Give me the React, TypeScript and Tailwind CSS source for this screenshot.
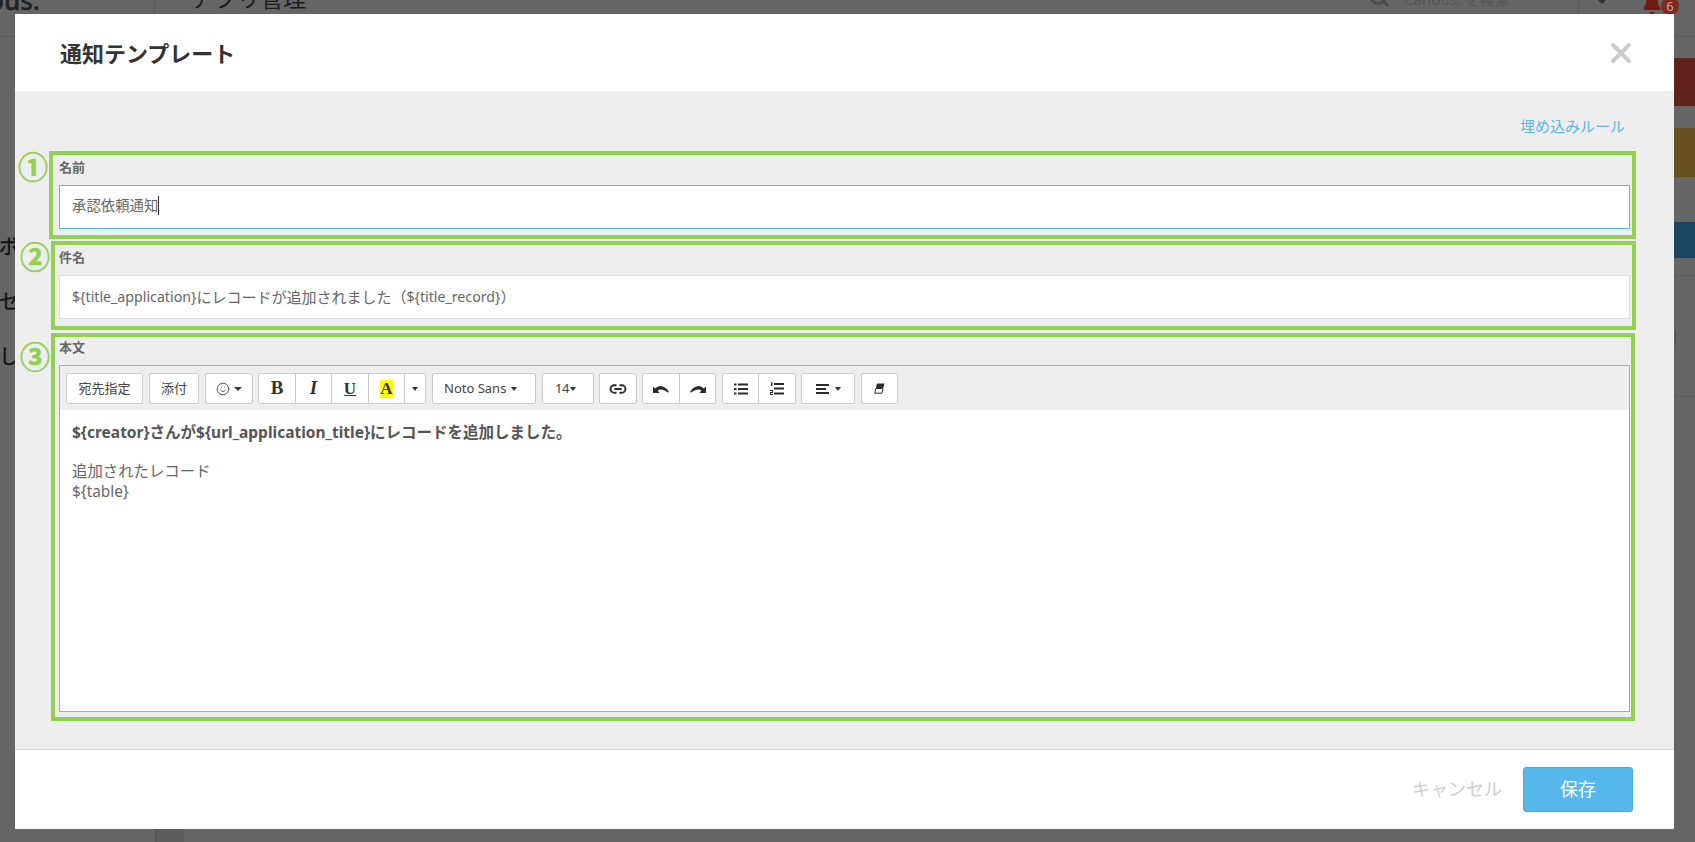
import { ReactNode } from "react"
import { X, Search, Bell, Link2, Smile } from "lucide-react"

function Caret({ small = false, className = "" }: { small?: boolean; className?: string }) {
  return (
    <span
      className={`inline-block w-0 h-0 border-x-transparent border-t-[#333] ${
        small ? "border-x-[3px] border-t-[4px]" : "border-x-[4px] border-t-[4px]"
      } ${className}`}
    />
  )
}

function ToolButton({ width, children, className = "" }: { width: string; children: ReactNode; className?: string }) {
  return (
    <div className={`h-[31px] flex items-center justify-center bg-white border border-[#ccc] rounded-[2px] text-[13px] text-[#444] ${width} ${className}`}>
      {children}
    </div>
  )
}

function GroupCell({ width, children, last = false }: { width: string; children: ReactNode; last?: boolean }) {
  return (
    <div className={`h-full flex items-center justify-center ${width} ${last ? "" : "border-r border-[#ccc]"}`}>
      {children}
    </div>
  )
}

function Group({ width, className = "", children }: { width: string; className?: string; children: ReactNode }) {
  return <div className={`h-[31px] flex bg-white border border-[#ccc] rounded-[2px] ${width} ${className}`}>{children}</div>
}

function UndoIcon({ flip = false }: { flip?: boolean }) {
  return (
    <svg width="16" height="8" viewBox="0 0 16 8" className={flip ? "-scale-x-100" : ""}>
      <path d="M0 1.6 L0 8 L6.6 8 L4.6 5.8 C6.6 4 9.6 3.6 14.6 7.4 L16 7 C12 0.6 6.2 -0.8 2.2 3.6 Z" fill="#2a2a2a" />
    </svg>
  )
}

function BulletList() {
  return (
    <svg width="14" height="12" viewBox="0 0 14 12" fill="#2a2a2a">
      <rect x="0" y="0.5" width="2.5" height="2" />
      <rect x="0" y="5" width="2.5" height="2" />
      <rect x="0" y="9.5" width="2.5" height="2" />
      <rect x="4" y="0.5" width="10" height="2" />
      <rect x="4" y="5" width="10" height="2" />
      <rect x="4" y="9.5" width="10" height="2" />
    </svg>
  )
}

function NumberList() {
  return (
    <svg width="14" height="13" viewBox="0 0 14 13" fill="#2a2a2a">
      <rect x="1" y="0.5" width="1.5" height="3.5" />
      <rect x="0" y="8" width="3" height="1" />
      <rect x="2" y="9" width="1" height="1" />
      <rect x="0" y="10" width="3" height="1" />
      <rect x="0" y="11" width="1" height="1" />
      <rect x="0" y="12" width="3" height="1" />
      <rect x="4" y="1" width="10" height="2" />
      <rect x="4" y="5.5" width="10" height="2" />
      <rect x="4" y="10.5" width="10" height="2" />
    </svg>
  )
}

function AlignIcon() {
  return (
    <svg width="13" height="10" viewBox="0 0 13 10" fill="#2a2a2a">
      <rect x="0" y="0" width="13" height="2" />
      <rect x="0" y="4" width="10" height="2" />
      <rect x="0" y="8" width="13" height="2" />
    </svg>
  )
}

function EraserIcon() {
  return (
    <svg width="11" height="11" viewBox="0 0 11 11">
      <path d="M3 0.5 L10.5 0.5 L9 6 L1.6 6 Z" fill="#2a2a2a" />
      <path d="M1.6 6 L0.8 10.2 L7.8 10.2 L9 6" fill="none" stroke="#2a2a2a" strokeWidth="1" />
    </svg>
  )
}

function Toolbar() {
  return (
    <div className="h-[44px] bg-[#eee] pl-[6px] pt-[7px] flex items-start">
      <ToolButton width="w-[77px]">宛先指定</ToolButton>
      <ToolButton width="w-[50px]" className="ml-[6px]">添付</ToolButton>
      <ToolButton width="w-[48px]" className="ml-[6px] gap-[4px]">
        <Smile size={14} strokeWidth={1.5} color="#444" />
        <Caret />
      </ToolButton>
      <Group width="w-[168px]" className="ml-[5px]">
        <GroupCell width="w-[37px]"><span className="font-['Liberation_Serif',serif] font-bold text-[19px] text-[#333]">B</span></GroupCell>
        <GroupCell width="w-[36px]"><span className="font-['Liberation_Serif',serif] font-bold italic text-[19px] text-[#333]">I</span></GroupCell>
        <GroupCell width="w-[37px]"><span className="font-['Liberation_Serif',serif] font-bold underline text-[17px] text-[#333]">U</span></GroupCell>
        <GroupCell width="w-[36px]"><span className="font-['Liberation_Serif',serif] font-bold text-[17px] leading-[18px] w-[13px] text-center bg-[#ffff00] text-[#333]">A</span></GroupCell>
        <GroupCell width="flex-1" last><Caret small /></GroupCell>
      </Group>
      <ToolButton width="w-[104px]" className="ml-[6px] justify-start! pl-[11px] gap-[5px]">
        Noto Sans
        <Caret small />
      </ToolButton>
      <ToolButton width="w-[52px]" className="ml-[6px] justify-start! pl-[12px] gap-[1px] tracking-[-0.5px]">
        14
        <Caret small />
      </ToolButton>
      <ToolButton width="w-[38px]" className="ml-[5px]">
        <Link2 size={18} strokeWidth={2.5} color="#2a2a2a" />
      </ToolButton>
      <Group width="w-[74px]" className="ml-[5px]">
        <GroupCell width="w-[37px]"><UndoIcon /></GroupCell>
        <GroupCell width="flex-1" last><UndoIcon flip /></GroupCell>
      </Group>
      <Group width="w-[74px]" className="ml-[6px]">
        <GroupCell width="w-[36px]"><BulletList /></GroupCell>
        <GroupCell width="flex-1" last><NumberList /></GroupCell>
      </Group>
      <ToolButton width="w-[54px]" className="ml-[5px] gap-[6px]">
        <AlignIcon />
        <Caret small />
      </ToolButton>
      <ToolButton width="w-[37px]" className="ml-[6px]">
        <EraserIcon />
      </ToolButton>
    </div>
  )
}

function Marker({ children, top }: { children: string; top: string }) {
  return (
    <span className={`absolute left-[-35px] ${top} w-[30px] text-center text-[#92d050] font-bold text-[30px] leading-[30px] [-webkit-text-stroke:0.6px_#92d050]`}>
      {children}
    </span>
  )
}

function Modal() {
  return (
    <div className="absolute left-[15px] top-[14px] w-[1659px] h-[815px] flex flex-col bg-white">
      <div className="h-[77px] shrink-0 flex items-center justify-between pl-[45px] pr-[37px]">
        <h2 className="text-[22px] font-bold leading-[30px] text-[#333]">通知テンプレート</h2>
        <X size={32} strokeWidth={3} color="#cccccc" />
      </div>

      <div className="flex-1 min-h-0 bg-[#eee]">
        <div className="h-[60px] pt-[25px] pr-[49px] text-right text-[15px] leading-[20px] text-[#5bb7ea]">埋め込みルール</div>

        <div className="relative ml-[34px] w-[1587px] h-[88px] border-[4px] border-[#92d050] pl-[6px] pr-[2px] pt-[3px]">
          <Marker top="top-[-3px]">①</Marker>
          <div className="text-[13px] leading-[18px] font-bold text-[#666]">名前</div>
          <div className="mt-[9px] h-[44px] flex items-center bg-white border border-[#5ab3e0] px-[12px] pb-[3px] text-[14.4px] text-[#666]">
            承認依頼通知
            <span className="w-px h-[19px] bg-[#333]" />
          </div>
        </div>

        <div className="relative mt-[2px] ml-[36px] w-[1585px] h-[89px] border-[4px] border-[#92d050] pl-[4px] pr-[2px] pt-[3px]">
          <Marker top="top-[-3px]">②</Marker>
          <div className="text-[13px] leading-[18px] font-bold text-[#666]">件名</div>
          <div className="mt-[9px] h-[44px] flex items-center bg-white border border-[#ddd] px-[12px] text-[14.2px] text-[#666]">
            {"${title_application}"}
            <span className="text-[15px]">にレコードが追加されました（</span>
            {"${title_record}"}
            <span className="text-[15px]">）</span>
          </div>
        </div>

        <div className="relative mt-[3px] ml-[36px] w-[1584px] h-[388px] border-[4px] border-[#92d050] pl-[4px] pr-[1px] pt-px">
          <Marker top="top-[5px]">③</Marker>
          <div className="text-[13px] leading-[18px] font-bold text-[#666]">本文</div>
          <div className="mt-[9px] h-[347px] border border-[#aaa] bg-white">
            <Toolbar />
            <div className="px-[12px] pt-[12px] text-[15.4px] leading-[20px] text-[#666]">
              <p className="font-bold text-[15.5px] text-[#555]">{"${creator}さんが${url_application_title}にレコードを追加しました。"}</p>
              <p className="h-[20px]" />
              <p>追加されたレコード</p>
              <p>{"${table}"}</p>
            </div>
          </div>
        </div>
      </div>

      <div className="h-[80px] shrink-0 border-t border-[#d5d5d5] bg-white flex items-start justify-end pt-[17px] pr-[41px]">
        <span className="h-[45px] flex items-center text-[18px] text-[#d0d0d0]">キャンセル</span>
        <button className="ml-[21px] w-[110px] h-[45px] rounded-[3px] bg-[#55b7ea] border border-[#4aa8e0] text-[18px] text-white">保存</button>
      </div>
    </div>
  )
}

export default function App() {
  return (
    <div className="relative h-[842px] w-[1695px] overflow-hidden flex flex-col bg-[#656565] font-['Noto_Sans','Noto_Sans_CJK_JP',sans-serif]">
      {/* dimmed page behind the dialog */}
      <div className="h-[37px] shrink-0 overflow-hidden border-b border-[#5a5a5a]">
        <div className="-mt-[26px] h-[36px] flex items-center">
          <div className="w-[167px] h-[60px] shrink-0 flex items-center pt-[16px] border-r border-[#595959] text-[26px] font-medium text-[#222] -ml-[12px] [-webkit-text-stroke:0.4px_#222]">ous.</div>
          <span className="ml-[36px] mt-[11px] text-[23px] leading-[36px] text-[#1c1c1c]">アプリ管理</span>
          <Search size={22} strokeWidth={3} color="#4c4c4c" className="ml-auto mt-[10px]" />
          <span className="ml-[14px] mt-[14px] w-[174px] text-[15px] text-[#555]">Canbus. を検索</span>
          <span className="w-px h-[60px] bg-[#595959]" />
          <Caret className="ml-[19px] mt-[20px]" />
          <Bell size={20} fill="#6e1b14" color="#6e1b14" className="ml-[36px] mt-[26px]" />
          <span className="-ml-px mr-[16px] mt-[27px] w-[18px] h-[18px] shrink-0 rounded-full bg-[#7c2a20] text-[#c4a89f] text-[13px] leading-[18px] text-center">6</span>
        </div>
      </div>

      <div className="flex-1 min-h-0 flex justify-between">
        <div className="w-[15px] mt-[200px] -ml-[1px] text-[20px] leading-[20px] text-[#111] [-webkit-text-stroke:0.3px_#111]">
          <div>ボ</div>
          <div className="mt-[35px]">セ</div>
          <div className="mt-[35px]">し</div>
        </div>
        <div className="w-[21px]">
          <div className="mt-[21px] h-[48px] bg-[#5f211b]" />
          <div className="mt-[22px] h-[49px] bg-[#675022]" />
          <div className="mt-[45px] h-[36px] bg-[#1a4663]" />
          <div className="mt-[17px] h-px bg-[#5a5a5a]" />
          <div className="mt-[54px] ml-px w-px h-[15px] bg-[#5a4060]" />
          <div className="mt-[51px] h-px bg-[#5a5a5a]" />
        </div>
      </div>

      <div className="h-[13px] shrink-0 ml-[155px] w-[29px] bg-[#5c5c5c] border-l border-[#505050]" />

      <Modal />
    </div>
  )
}
